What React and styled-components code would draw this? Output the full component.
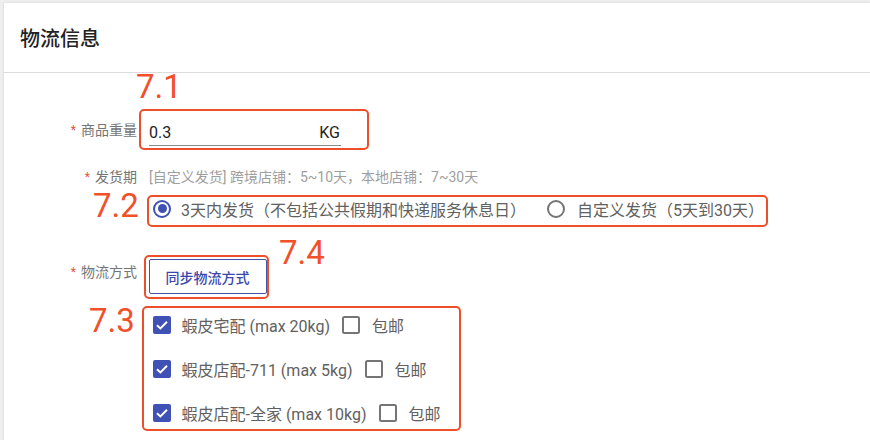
import React from 'react'
import styled, { createGlobalStyle } from 'styled-components'

const GlobalStyle = createGlobalStyle`
  html, body {
    margin: 0;
    padding: 0;
    background: #efefef;
    font-family: Roboto, "Noto Sans CJK SC", sans-serif;
  }
`

const Card = styled.div`
  margin: 3px 0 0 3px;
  min-height: 437px;
  background: #fff;
  border-left: 1px solid #e2e2e2;
  box-shadow: 0 -1px 2px rgba(0, 0, 0, 0.06);
`

const Header = styled.div`
  height: 69px;
  display: flex;
  align-items: center;
  padding-left: 16px;
  font-size: 20px;
  font-weight: 500;
  color: #222;
  border-bottom: 1px solid #dcdcdc;
`

const Body = styled.div`
  padding-top: 36px;
`

const Row = styled.div`
  display: flex;
  align-items: ${p => p.$align || 'center'};
  margin-top: ${p => p.$top || 0}px;
`

const Label = styled.div`
  width: 133px;
  flex: none;
  text-align: right;
  font-size: 14px;
  color: #757575;
  line-height: ${p => p.$lh || 20}px;
  padding-top: ${p => p.$pt || 0}px;
`

const Star = styled.span`
  color: #e5533c;
  font-size: 12px;
  margin-right: 5px;
  vertical-align: top;
`

const Marked = styled.div`
  position: relative;
  margin-left: ${p => p.$ml}px;
  border: 2.5px solid #ee4f2b;
  border-radius: 5px;
  box-sizing: border-box;
`

// annotation numerals laid over the form
const Tag = styled.span`
  position: absolute;
  top: ${p => p.$top}px;
  left: ${p => p.$left}px;
  font-family: Roboto, sans-serif;
  font-weight: 400;
  font-size: 33px;
  line-height: 22px;
  color: #f0502a;
  white-space: nowrap;
`

const WeightBox = styled(Marked)`
  width: 230px;
  height: 41px;
  padding: 8px 0 0 8px;
`

const InputLine = styled.div`
  width: 192px;
  height: 26px;
  display: flex;
  align-items: center;
  justify-content: space-between;
  border-bottom: 1px solid #8a8a8a;
  font-size: 16px;
  color: #222;
`

const Unit = styled.span`
  margin-right: 1px;
`

const Hint = styled.div`
  margin-left: 12px;
  font-size: 14px;
  line-height: 16px;
  color: #9e9e9e;
`

const RadioBox = styled(Marked)`
  width: 621px;
  height: 32px;
  display: flex;
  align-items: center;
  padding: 0 0 5px 4px;
  margin-top: 10px;
`

const RadioItem = styled.label`
  display: flex;
  align-items: center;
  margin-right: ${p => p.$mr || 0}px;
  font-size: 16px;
  color: #616161;
`

const RadioCircle = styled.span`
  width: 18px;
  height: 18px;
  box-sizing: border-box;
  border-radius: 50%;
  border: 2px solid ${p => (p.$on ? '#3f51b5' : '#757575')};
  display: flex;
  align-items: center;
  justify-content: center;
  margin-right: ${p => p.$gap}px;
  &::after {
    content: '';
    width: 9px;
    height: 9px;
    border-radius: 50%;
    background: ${p => (p.$on ? '#3f51b5' : 'transparent')};
  }
`

const ButtonBox = styled(Marked)`
  height: 44px;
  padding: 2px 0 0 2.5px;
`

const SyncButton = styled.button`
  width: 118px;
  height: 35px;
  border: 1px solid #4353a8;
  border-radius: 2px;
  background: #fff;
  color: #3949ab;
  font-family: Roboto, "Noto Sans CJK SC", sans-serif;
  font-size: 14px;
  font-weight: 500;
  cursor: pointer;
`

const ShipBox = styled(Marked)`
  width: 319px;
  height: 125px;
  padding: 0 0 0 8.5px;
  display: flex;
  flex-direction: column;
  gap: 11px;
`

const ShipRow = styled.div`
  height: 33px;
  display: flex;
  align-items: center;
  font-size: 16px;
  color: #616161;
`

const ShipName = styled.span`
  margin: 0 12px 0 11px;
`

const Free = styled.span`
  margin-left: 12px;
`

const Check = ({ on }) => (
  <svg width="18" height="18" viewBox="0 0 18 18">
    {on ? (
      <>
        <rect x="0" y="0" width="18" height="18" rx="2" fill="#3f51b5" />
        <path d="M4 9.2 L7.4 12.4 L14 5.8" fill="none" stroke="#fff" strokeWidth="2" />
      </>
    ) : (
      <rect x="1" y="1" width="16" height="16" rx="1.5" fill="none" stroke="#757575" strokeWidth="2" />
    )}
  </svg>
)

const shipping = ['蝦皮宅配 (max 20kg)', '蝦皮店配-711 (max 5kg)', '蝦皮店配-全家 (max 10kg)']

export default function App() {
  return (
    <>
      <GlobalStyle />
      <Card>
        <Header>物流信息</Header>
        <Body>
          <Row>
            <Label><Star>*</Star>商品重量</Label>
            <WeightBox $ml={2}>
              <Tag $top={-35} $left={-5}>7.1</Tag>
              <InputLine>
                <span>0.3</span>
                <Unit>KG</Unit>
              </InputLine>
            </WeightBox>
          </Row>

          <Row $top={19}>
            <Label $lh={16}><Star>*</Star>发货期</Label>
            <Hint>[自定义发货] 跨境店铺：5~10天，本地店铺：7~30天</Hint>
          </Row>
          <Row>
            <Label />
            <RadioBox $ml={10}>
              <Tag $top={-2} $left={-56}>7.2</Tag>
              <RadioItem $mr={21}>
                <RadioCircle $on $gap={10} />
                3天内发货（不包括公共假期和快递服务休息日）
              </RadioItem>
              <RadioItem>
                <RadioCircle $gap={12} />
                自定义发货（5天到30天）
              </RadioItem>
            </RadioBox>
          </Row>

          <Row $top={28} $align="flex-start">
            <Label $pt={7}><Star>*</Star>物流方式</Label>
            <ButtonBox $ml={7}>
              <Tag $top={-15} $left={133}>7.4</Tag>
              <SyncButton>同步物流方式</SyncButton>
            </ButtonBox>
          </Row>

          <Row $top={7}>
            <Label />
            <ShipBox $ml={5}>
              <Tag $top={2} $left={-55}>7.3</Tag>
              {shipping.map(name => (
                <ShipRow key={name}>
                  <Check on />
                  <ShipName>{name}</ShipName>
                  <Check />
                  <Free>包邮</Free>
                </ShipRow>
              ))}
            </ShipBox>
          </Row>
        </Body>
      </Card>
    </>
  )
}
